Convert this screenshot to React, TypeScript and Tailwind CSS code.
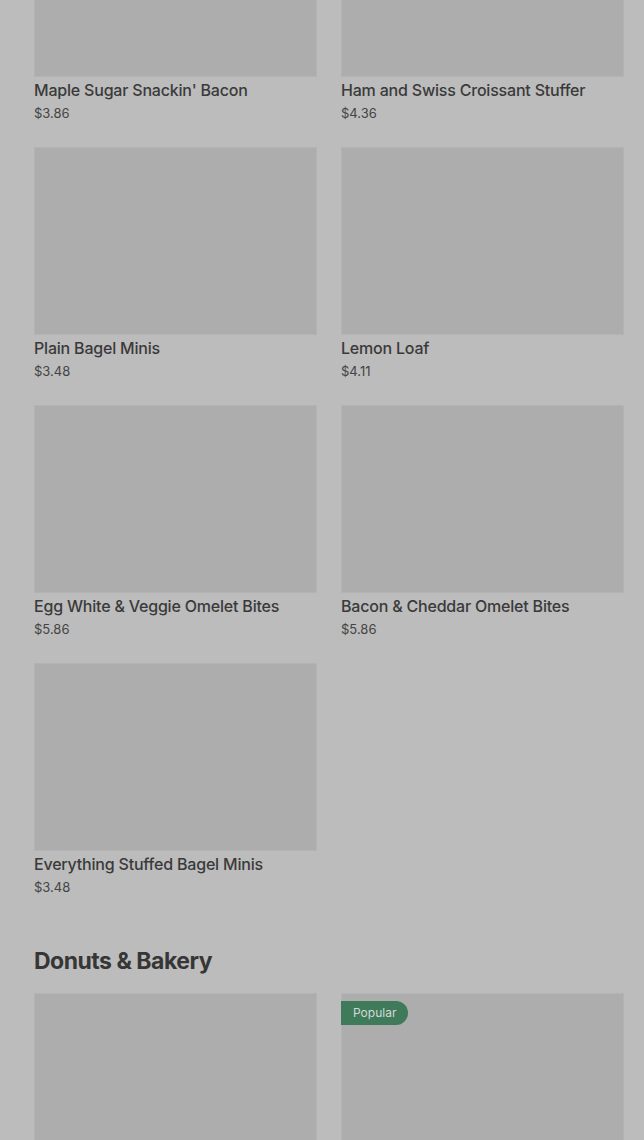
import React from 'react'

interface Item {
  name: string
  price: string
  popular?: boolean
}

const breakfast: Item[] = [
  { name: "Maple Sugar Snackin' Bacon", price: '$3.86' },
  { name: 'Ham and Swiss Croissant Stuffer', price: '$4.36' },
  { name: 'Plain Bagel Minis', price: '$3.48' },
  { name: 'Lemon Loaf', price: '$4.11' },
  { name: 'Egg White & Veggie Omelet Bites', price: '$5.86' },
  { name: 'Bacon & Cheddar Omelet Bites', price: '$5.86' },
  { name: 'Everything Stuffed Bagel Minis', price: '$3.48' }
]

function ItemImage({ popular }: { popular?: boolean }) {
  return (
    <div className="relative h-[188px] bg-[#adadad] border border-[#b3b3b3]">
      {popular && (
        <span className="absolute -left-px top-[7px] h-6 pl-3 pr-3 flex items-center rounded-r-full bg-[#3f7b5b] text-[#d3d9d5] text-[12px]">
          Popular
        </span>
      )}
    </div>
  )
}

function ItemCard({ item }: { item: Item }) {
  return (
    <div className="flex flex-col">
      <ItemImage popular={item.popular} />
      <div className="pt-px text-[16px] leading-6 font-medium tracking-[-0.2px] text-[#3a3a3a]">{item.name}</div>
      <div className="pt-px text-[13px] leading-5 text-[#444444]">{item.price}</div>
    </div>
  )
}

export default function App() {
  return (
    <div className="h-[1140px] overflow-hidden bg-[#bcbcbc] font-['Inter',sans-serif]">
      <div className="pl-[34px] pr-[20px] -mt-[111px]">
        <div className="grid grid-cols-2 gap-x-6 gap-y-6">
          {breakfast.map((item) => (
            <ItemCard key={item.name} item={item} />
          ))}
        </div>

        <h2 className="mt-12 text-[23px] leading-8 font-bold tracking-[-0.5px] text-[#363636]">
          Donuts &amp; Bakery
        </h2>

        {/* bakery row, cut by the bottom of the view */}
        <div className="mt-4 grid grid-cols-2 gap-x-6">
          <ItemImage />
          <ItemImage popular />
        </div>
      </div>
    </div>
  )
}
